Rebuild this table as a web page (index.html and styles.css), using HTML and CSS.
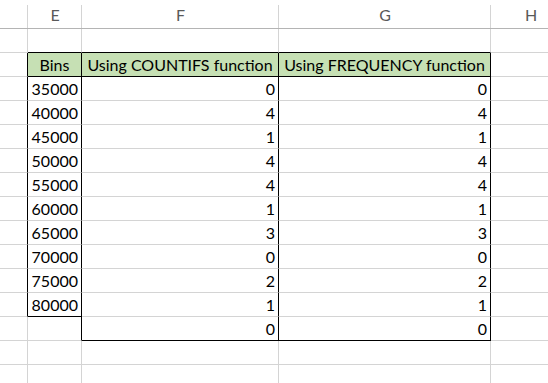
FILE: index.html
```html
<!DOCTYPE html>
<html>
<head>
<meta charset="utf-8">
<link rel="stylesheet" href="styles.css">
</head>
<body>
<div class="sheet">
  <div class="ch rh"></div>
  <div class="ch">E</div>
  <div class="ch">F</div>
  <div class="ch">G</div>
  <div class="ch">H</div>

  <div class="c"></div>
  <div class="c bb"></div>
  <div class="c bb"></div>
  <div class="c bb"></div>
  <div class="c"></div>

  <div class="c br"></div>
  <div class="c hd br bb">Bins</div>
  <div class="c hd br bb">Using COUNTIFS function</div>
  <div class="c hd br bb">Using FREQUENCY function</div>
  <div class="c"></div>

  <div class="c br"></div><div class="c n br">35000</div><div class="c n br">0</div><div class="c n br">0</div><div class="c"></div>
  <div class="c br"></div><div class="c n br">40000</div><div class="c n br">4</div><div class="c n br">4</div><div class="c"></div>
  <div class="c br"></div><div class="c n br">45000</div><div class="c n br">1</div><div class="c n br">1</div><div class="c"></div>
  <div class="c br"></div><div class="c n br">50000</div><div class="c n br">4</div><div class="c n br">4</div><div class="c"></div>
  <div class="c br"></div><div class="c n br">55000</div><div class="c n br">4</div><div class="c n br">4</div><div class="c"></div>
  <div class="c br"></div><div class="c n br">60000</div><div class="c n br">1</div><div class="c n br">1</div><div class="c"></div>
  <div class="c br"></div><div class="c n br">65000</div><div class="c n br">3</div><div class="c n br">3</div><div class="c"></div>
  <div class="c br"></div><div class="c n br">70000</div><div class="c n br">0</div><div class="c n br">0</div><div class="c"></div>
  <div class="c br"></div><div class="c n br">75000</div><div class="c n br">2</div><div class="c n br">2</div><div class="c"></div>
  <div class="c br"></div><div class="c n br bb">80000</div><div class="c n br">1</div><div class="c n br">1</div><div class="c"></div>

  <div class="c"></div><div class="c br"></div><div class="c n br bb">0</div><div class="c n br bb">0</div><div class="c"></div>

  <div class="c"></div><div class="c"></div><div class="c"></div><div class="c"></div><div class="c"></div>
  <div class="c"></div><div class="c"></div><div class="c"></div><div class="c"></div><div class="c"></div>
</div>
</body>
</html>
```
FILE: styles.css
```css
html, body {
  margin: 0;
  padding: 0;
  background: #ffffff;
}
body {
  width: 548px;
  height: 383px;
  overflow: hidden;
  font-family: Lato, "Open Sans", sans-serif;
  font-size: 16px;
  color: #000000;
}
.sheet {
  display: grid;
  grid-template-columns: 28px 54px 197px 212px 80px;
  grid-template-rows: 29px repeat(15, 24px);
}
.ch {
  box-sizing: border-box;
  border-bottom: 1px solid #b4b4b4;
  background: linear-gradient(#d4d4d4, #d4d4d4) right 5px / 1px calc(100% - 5px) no-repeat;
  color: #595959;
  text-align: center;
  line-height: 28px;
  padding-top: 1px;
}
.c {
  box-sizing: border-box;
  border-right: 1px solid #d4d4d4;
  border-bottom: 1px solid #d4d4d4;
  line-height: 23px;
  white-space: nowrap;
  overflow: hidden;
}
.br {
  border-right-color: #000000;
}
.bb {
  border-bottom-color: #000000;
}
.hd {
  background: #c6e0b4;
  text-align: center;
}
.n {
  text-align: right;
  padding-right: 3px;
}
```
